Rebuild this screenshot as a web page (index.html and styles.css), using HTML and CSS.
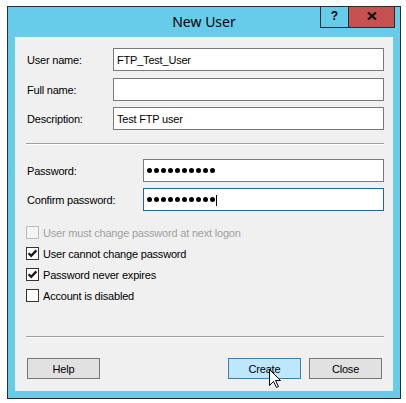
FILE: index.html
```html
<!DOCTYPE html>
<html>
<head>
<meta charset="utf-8">
<link rel="stylesheet" href="styles.css">
</head>
<body>
<div class="window">
  <div class="titlebar">
    <div class="title">New User</div>
    <div class="controls">
      <div class="ctl-help">?</div>
      <div class="ctl-close">
        <svg width="10" height="8" viewBox="0 0 10 8"><path d="M1 0.5 L9 7.5 M9 0.5 L1 7.5" stroke="#111" stroke-width="2.2" fill="none"/></svg>
      </div>
    </div>
  </div>
  <div class="client">
    <div class="row"><span class="label">User name:</span><div class="field">FTP_Test_User</div></div>
    <div class="row row-2"><span class="label">Full name:</span><div class="field"></div></div>
    <div class="row row-3"><span class="label">Description:</span><div class="field">Test FTP user</div></div>
    <div class="sep sep-1"></div>
    <div class="row row-pw"><span class="label label-wide">Password:</span><div class="field"><span class="dots"><i></i><i></i><i></i><i></i><i></i><i></i><i></i><i></i><i></i><i></i></span></div></div>
    <div class="row row-cf"><span class="label label-wide">Confirm password:</span><div class="field focused"><span class="dots"><i></i><i></i><i></i><i></i><i></i><i></i><i></i><i></i><i></i><i></i></span><span class="caret"></span></div></div>
    <div class="checks">
      <div class="check disabled"><span class="box"></span><span class="ctext">User must change password at next logon</span></div>
      <div class="check"><span class="box"><svg width="11" height="11" viewBox="0 0 11 11"><path d="M1.6 5.2 L4.2 7.9 L9.4 2.4" stroke="#1a1a1a" stroke-width="2.3" fill="none"/></svg></span><span class="ctext">User cannot change password</span></div>
      <div class="check"><span class="box"><svg width="11" height="11" viewBox="0 0 11 11"><path d="M1.6 5.2 L4.2 7.9 L9.4 2.4" stroke="#1a1a1a" stroke-width="2.3" fill="none"/></svg></span><span class="ctext">Password never expires</span></div>
      <div class="check"><span class="box"></span><span class="ctext">Account is disabled</span></div>
    </div>
    <div class="sep sep-2"></div>
    <div class="buttons">
      <div class="btn">Help</div>
      <div class="spacer"></div>
      <div class="btn btn-default">Create
        <svg class="cursor" width="13" height="20" viewBox="0 0 13 20"><path d="M0.5 0.5 L0.5 16.5 L4.5 12.5 L7.5 18.5 L9.5 17.5 L6.5 11.5 L11.5 11.5 Z" fill="#fff" stroke="#000" stroke-width="1"/></svg>
      </div>
      <div class="btn btn-close">Close</div>
    </div>
  </div>
</div>
</body>
</html>
```

FILE: styles.css
```css
* { box-sizing: border-box; }
html, body { margin: 0; padding: 0; background: #ffffff; }
body {
  font-family: "Liberation Sans", Arial, sans-serif;
  font-size: 11px;
  color: #000;
}
.window {
  margin: 6px 0 0 7px;
  width: 394px;
  height: 393px;
  border: 1px solid #2b2b2b;
  background: #67cbea;
  display: flex;
  flex-direction: column;
  padding-bottom: 7px;
}
.titlebar {
  height: 30px;
  display: grid;
  grid-template-columns: 1fr auto 1fr;
  align-items: start;
}
.title {
  grid-column: 2;
  font-family: "Noto Sans", "Open Sans", sans-serif;
  font-size: 14px;
  line-height: 29px;
  color: #000;
}
.controls {
  grid-column: 3;
  justify-self: end;
  margin-right: 5px;
  display: flex;
}
.ctl-help {
  width: 28px;
  height: 21px;
  border-left: 1px solid #2b2b2b;
  border-bottom: 1px solid #2b2b2b;
  display: flex;
  align-items: center;
  justify-content: center;
  font-weight: bold;
  font-size: 12px;
  padding-bottom: 2px;
}
.ctl-close {
  width: 47px;
  height: 21px;
  background: #c75050;
  border-left: 1px solid #2b2b2b;
  border-right: 1px solid #2b2b2b;
  border-bottom: 1px solid #2b2b2b;
  display: flex;
  align-items: center;
  justify-content: center;
  padding-bottom: 3px;
}
.client {
  flex: 1;
  margin: 0 7px;
  background: #f0f0f0;
  padding: 11px 9px 0 12px;
  display: flex;
  flex-direction: column;
  letter-spacing: -0.2px;
}
.row {
  display: flex;
  align-items: center;
  height: 23px;
}
.row-2 { margin-top: 7px; }
.row-3 { margin-top: 6px; }
.row-pw { margin-top: 14px; }
.row-cf { margin-top: 6px; }
.label { width: 86px; flex: none; }
.label-wide { width: 116px; }
.field {
  flex: 1;
  height: 23px;
  background: #fff;
  border: 1px solid #7a7a7a;
  padding: 0 3px;
  display: flex;
  align-items: center;
  white-space: nowrap;
}
.field.focused { border-color: #22669a; }
.dots { display: flex; gap: 2px; margin-top: -1px; }
.dots i {
  display: block;
  width: 5px;
  height: 5px;
  border-radius: 50%;
  background: #000;
}
.caret {
  display: block;
  width: 1px;
  height: 11px;
  background: #000;
  margin-left: 1px;
  margin-top: 1px;
}
.sep {
  height: 2px;
  border-top: 1px solid #a0a0a0;
  border-bottom: 1px solid #ffffff;
  margin-left: -1px;
}
.sep-1 { margin-top: 13px; }
.sep-2 { margin-top: 34px; }
.checks {
  margin-top: 15px;
  display: flex;
  flex-direction: column;
  gap: 8px;
}
.check {
  display: flex;
  align-items: center;
  height: 13px;
  margin-left: -1px;
}
.box {
  width: 13px;
  height: 13px;
  border: 1px solid #333;
  background: #fff;
  flex: none;
  display: flex;
}
.ctext { margin-left: 4px; white-space: nowrap; }
.check.disabled .box { border-color: #bcbcbc; background: #f4f4f4; }
.check.disabled .ctext { color: #a0a0a0; }
.buttons {
  margin-top: 20px;
  margin-right: 2px;
  display: flex;
}
.spacer { flex: 1; }
.btn {
  position: relative;
  width: 73px;
  height: 21px;
  background: #e1e1e1;
  border: 1px solid #777;
  display: flex;
  align-items: center;
  justify-content: center;
}
.btn-default {
  background: #bee6fd;
  border-color: #3c7fb1;
}
.btn-close { margin-left: 8px; }
.cursor {
  position: absolute;
  left: 40px;
  top: 10px;
}
```
